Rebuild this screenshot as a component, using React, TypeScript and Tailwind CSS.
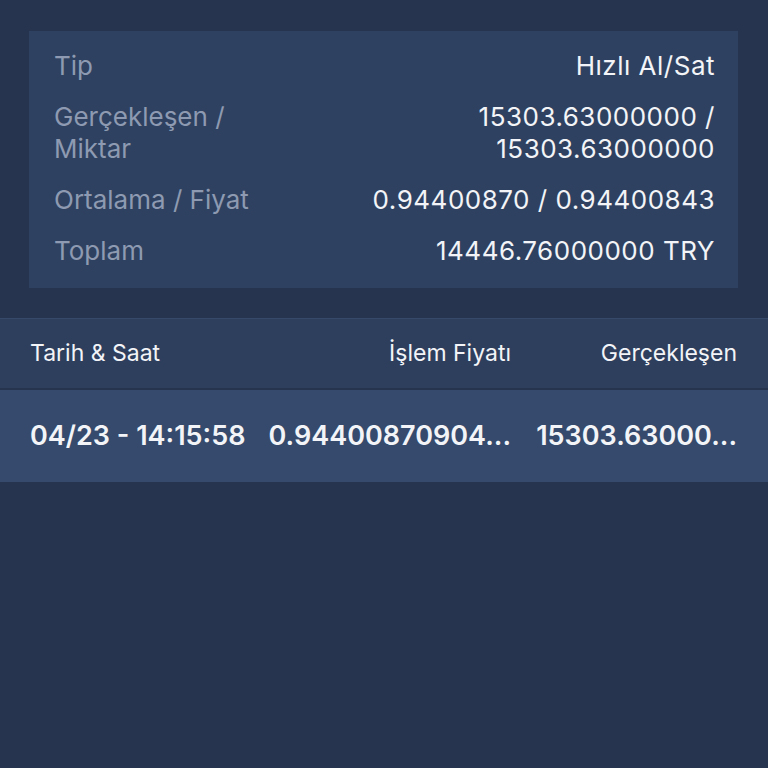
const summary = [
  { label: ["Tip"], value: ["Hızlı Al/Sat"] },
  { label: ["Gerçekleşen /", "Miktar"], value: ["15303.63000000 /", "15303.63000000"] },
  { label: ["Ortalama / Fiyat"], value: ["0.94400870 / 0.94400843"] },
  { label: ["Toplam"], value: ["14446.76000000 TRY"] },
];

export default function App() {
  return (
    <div className="min-h-[768px] w-full bg-[#27344f] font-['Inter','Noto_Sans',sans-serif] text-[#f2f4f7]">
      <div className="pt-[31px] pl-[29px] pr-[30px]">
        <div className="flex flex-col gap-[19px] bg-[#2f4160] pt-[19px] pb-[21px] pl-[25px] pr-[23px] text-[26px] leading-[32px]">
          {summary.map((r) => (
            <div key={r.label[0]} className="flex justify-between">
              <div className="text-[#8d9ab1]">
                {r.label.map((l) => (
                  <div key={l}>{l}</div>
                ))}
              </div>
              <div className="text-right tracking-[0.5px]">
                {r.value.map((v) => (
                  <div key={v}>{v}</div>
                ))}
              </div>
            </div>
          ))}
        </div>
      </div>

      <div className="mt-[30px]">
        <div className="flex h-[70px] items-center border-t border-[#36496a] bg-[#2e3f5e] pl-[30px] pr-[31px] text-[23px]">
          <div className="w-[230px]">Tarih &amp; Saat</div>
          <div className="w-[251px] text-right">İşlem Fiyatı</div>
          <div className="flex-1 text-right">Gerçekleşen</div>
        </div>
        <div className="h-[2px] bg-[#26344e]" />
        <div className="flex h-[92px] items-center bg-[#354a6c] pl-[30px] pr-[31px] text-[27px] font-semibold">
          <div className="w-[230px] whitespace-nowrap">04/23 - 14:15:58</div>
          <div className="w-[251px] whitespace-nowrap text-right">0.94400870904...</div>
          <div className="flex-1 whitespace-nowrap text-right">15303.63000...</div>
        </div>
      </div>
    </div>
  );
}
